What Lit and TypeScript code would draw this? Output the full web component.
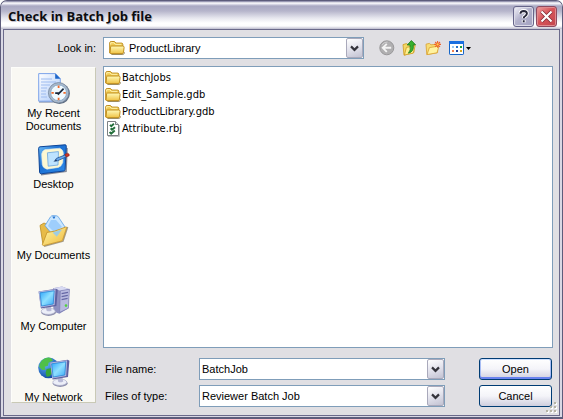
import { LitElement, html, css, svg, TemplateResult } from "lit";
import { customElement, property, state } from "lit/decorators.js";

const folder = html`<svg class="i16" viewBox="0 0 16 16" aria-hidden="true">
  <defs>
    <linearGradient id="ff" x1="0" y1="0" x2="0" y2="1">
      <stop offset="0" stop-color="#fffab8" /><stop offset="1" stop-color="#efc244" />
    </linearGradient>
  </defs>
  <path d="M.7 3q0-1.5 1.5-1.5h3.2l1.6 1.6h5.5q1.3 0 1.3 1.3V13H.7z" fill="#f0cb54" stroke="#bd8c20" />
  <path d="M1.7 4.6V2.7h3.2l1.4 1.6h6" fill="none" stroke="#fff3b0" />
  <path d="M2.6 6h11q1.6 0 1.5 1.4l-.6 4.8q-.2 1.4-1.4 1.4H2q-1 0-.9-1L1.6 7q.1-1 1-1z" fill="url(#ff)" stroke="#c29020" />
  <path d="M2.4 14.5h11.4q1.6-.2 1.8-2.2" fill="none" stroke="#6d5415" stroke-opacity=".65" />
</svg>`;

const batchFile = html`<svg class="i16" viewBox="0 0 16 16" aria-hidden="true">
  <path d="M2.5.5h8l3 3v11h-11z" fill="#fff" stroke="#7c8083" />
  <path d="M14.5 4v11.5H3" fill="none" stroke="#c0c2c4" />
  <path d="M10.5.5v3h3" fill="#dfe3e8" stroke="#7c8083" />
  <path d="M5 3.8l1.3 1.4 2.6-2.4M5.6 7.4L7 8.8l3-2.6M4.6 11l1.6 1.6 3.6-3" fill="none" stroke="#24703c" stroke-width="1.9" />
</svg>`;

const screen = (x: number, y: number) => svg`<g transform="translate(${x} ${y})">
  <ellipse cx="10" cy="23.5" rx="7.4" ry="3.6" fill="#8f90ad" />
  <ellipse cx="9.6" cy="22.4" rx="7" ry="3.2" fill="#eceef8" stroke="#a5a7c4" stroke-width=".6" />
  <path d="M7 17l5-1 1 5.6q-2.6 1.6-5 .4z" fill="#b7b9d6" />
  <path d="M0 2.6L17.4 0l1.8 1-1.4 16.2L2.4 19.6z" fill="#5f61a0" />
  <path d="M0 2.6L17 .4l-1 15.8L2 18.6z" fill="#b4b8e0" />
  <path d="M1.4 4l14.2-2-1 13.2L3 17.2z" fill="url(#lcd)" stroke="#2a86d6" stroke-width=".8" />
</g>`;

const lcd = svg`<defs><linearGradient id="lcd" x1="0" y1="0" x2="1" y2="1">
  <stop offset="0" stop-color="#2aa3fb" /><stop offset=".5" stop-color="#8fe0ff" /><stop offset="1" stop-color="#3aa7f6" />
</linearGradient></defs>`;

const recentIcon = html`<svg class="i32" viewBox="0 0 32 32" aria-hidden="true">
  <defs><linearGradient id="pg" x1="0" y1="0" x2="1" y2="1">
    <stop offset="0" stop-color="#fff" /><stop offset="1" stop-color="#a9c8fa" /></linearGradient></defs>
  <path d="M1 29h20l2-2" stroke="#5c6d96" stroke-opacity=".6" stroke-width="1.5" fill="none" />
  <path d="M.7.6h16.8l4.8 5v22.6H.7z" fill="url(#pg)" stroke="#6f9be8" stroke-width=".9" />
  <path d="M17.2.6v5.2h5.2z" fill="#1d66c9" />
  <path d="M3 6h11M3 9h15M3 12h9M3 15h6M3 18h5M3 21h5M3 24h6" stroke="#9ebcf0" stroke-width="1.2" />
  <circle cx="21.5" cy="20.6" r="10.4" fill="#5d6c80" />
  <circle cx="20.6" cy="19.8" r="10.2" fill="#a9b9cc" stroke="#72849b" stroke-width=".8" />
  <circle cx="20.6" cy="19.8" r="7.9" fill="#f1faff" stroke="#7fa3c4" stroke-width=".8" />
  <path d="M20.6 12.6v2.4M20.6 24.8v2.4M13.4 19.8h2.4M25.4 19.8h2.4" stroke="#f06b2c" stroke-width="1.8" />
  <path d="M17.2 20.2h4l4.4-4.6M21.2 20.2l-1.4 1.4" fill="none" stroke="#17263a" stroke-width="1.7" />
</svg>`;

const desktopIcon = html`<svg class="i32" viewBox="0 0 32 32" aria-hidden="true">
  <defs><linearGradient id="bl" x1="0" y1="0" x2="1" y2="1">
    <stop offset="0" stop-color="#6fc0fa" /><stop offset=".4" stop-color="#1b6fd2" /><stop offset="1" stop-color="#2e8cea" /></linearGradient></defs>
  <path d="M3 30.6l25-3.4L29 4" fill="none" stroke="#555d70" stroke-width="1.6" stroke-opacity=".7" />
  <path d="M.6 4.4Q.6 3 2 2.8L27 .8q1.4 0 1.3 1.4l-1.2 23.4q-.2 1.2-1.4 1.4L3.2 29.8q-1.4 0-1.6-1.4z" fill="url(#bl)" stroke="#0d4496" />
  <path d="M7 5.6l14.8-1.4q3.8 1.8 3.6 5.4l-.6 9q-1 3.6-4.4 4.8L9 25.2q-4-1-4.8-4.6L3.6 10Q4 7 7 5.6z" fill="#fdf8d2" stroke="#d6e8ee" stroke-width=".6" />
  <path d="M9.4 8.8l11-1.2v4l-.4 9.4-9.8 1.2z" fill="#bde3ff" stroke="#6aa4dc" stroke-width=".8" />
  <path d="M17 16.8l1.4-2.4 9-3.6 1.2 2-9.2 4z" fill="#6aa9ea" stroke="#1c4e90" stroke-width=".8" />
  <path d="M15.4 17.8l2.6-2.6 1.2 1.8z" fill="#1c3b6a" />
  <path d="M26.8 10.4l2.8-1.2q2.2.6 1.6 2.6l-3 1.2z" fill="#cc3423" stroke="#8c2015" stroke-width=".6" />
</svg>`;

const documentsIcon = html`<svg class="i32" viewBox="0 0 32 32" aria-hidden="true">
  <defs><linearGradient id="fd" x1="0" y1="0" x2="1" y2="1">
    <stop offset="0" stop-color="#fff7a8" /><stop offset="1" stop-color="#f0b93a" /></linearGradient></defs>
  <path d="M6 31.2l19-5L29.6 12" fill="none" stroke="#6b6147" stroke-opacity=".6" stroke-width="1.5" />
  <path d="M2 10.4l4-2.4 3 1.4 6-1.6 7 8-17 14z" fill="#e7bb48" stroke="#b98c24" stroke-width=".8" />
  <path d="M7 10.6L12.4 2q1-1.4 2.6-1.4l3.6.2q1.2.2 1.8 1.2l6.6 10L16.4 22z" fill="#c9e6ff" stroke="#5c9fe4" stroke-width=".8" />
  <path d="M13 5l5 0 6 7-8 5-6-6z" fill="#8fc6fb" fill-opacity=".75" />
  <path d="M14.4 1.4h3l-.8 2.2h-1.4z" fill="#2b77d0" />
  <path d="M4.4 29.6L9 17.4l7.4-1.2L27.8 12q1-.2.8.8L24.6 25q-.2.8-1 1L5.6 30.6q-1 0-1.2-1z" fill="url(#fd)" stroke="#c8962b" stroke-width=".9" />
  <path d="M14.6 17.4l9.6-3.2-5.4 7.6z" fill="#8fcaf6" fill-opacity=".85" />
</svg>`;

const computerIcon = html`<svg class="i32" viewBox="0 0 32 32" aria-hidden="true">${lcd}
  <path d="M15 2.2L24 .6l7.4 2.6-1 19-9 5.6-6-2.4z" fill="#8d8fc0" />
  <path d="M15 2.2L24 .6l7.4 2.6-9 1.6z" fill="#d8daf2" />
  <path d="M22.4 4.8l9-1.6-1 19-8.8 4.2z" fill="#b9bbe0" stroke="#7476ac" stroke-width=".6" />
  <path d="M23.6 7.6l6.4-1.2M23.6 10.6l6.2-1.2M23.6 13.6l6-1.2" stroke="#6567a4" stroke-width="1.1" />
  <circle cx="28" cy="19.6" r="1.3" fill="#50d33c" />
  ${screen(0.6, 2.8)}
</svg>`;

const networkIcon = html`<svg class="i32" viewBox="0 0 32 32" aria-hidden="true">${lcd}
  <defs><radialGradient id="gl" cx=".35" cy=".3" r=".8">
    <stop offset="0" stop-color="#63baff" /><stop offset="1" stop-color="#0b3f9e" /></radialGradient></defs>
  <circle cx="10.6" cy="10.8" r="10.4" fill="url(#gl)" />
  <path d="M5 2.4q4-2.6 8-1.4l2 2.6-4.4 2.2-.6 3-3.4 1 1 3-3.4.2-3-3q.4-5 3.8-7.6z" fill="#4fc04a" />
  <path d="M8.6 12l5-1 2 3.6-4 4.6-3 .6-1-4z" fill="#37a53a" />
  ${screen(12.2, 2.8)}
</svg>`;

const backIcon = html`<svg class="i16" viewBox="0 0 16 16" aria-hidden="true">
  <circle cx="7.8" cy="7.8" r="7" fill="#b0afb1" stroke="#989799" />
  <path d="M3 5q2-3.2 5.6-3" stroke="#cfcecf" fill="none" />
  <path d="M7.8 3.8L3.8 7.8l4 4M4.2 7.8h8" fill="none" stroke="#f4f4f4" stroke-width="1.9" />
</svg>`;

const upIcon = html`<svg class="i16" viewBox="0 0 16 16" aria-hidden="true">
  <path d="M1 4.6l3.4-1L6 4.6l6-.8v8.6L2 15.2z" fill="#f4d767" stroke="#d3a22c" stroke-width=".9" />
  <path d="M2.4 15l2-7.6 8.8-1.8-2 7.6z" fill="#fdf08f" stroke="#d3a22c" stroke-width=".9" />
  <path d="M6.4 13.2Q9.2 10.6 8 5H5.2L9.4.5l4.2 4.3h-2.4q1.2 7-4.8 8.4z" fill="#36b02e" stroke="#1b7a1b" stroke-width=".8" />
</svg>`;

const newIcon = html`<svg class="i16" viewBox="0 0 16 16" aria-hidden="true">
  <path d="M1 4.2l3.4-.8L6 4.8l6.6-.6v8.4L1.8 14.6z" fill="#f7dd74" stroke="#dba63a" stroke-width=".9" />
  <path d="M2 14.6L4.4 7.6 14 6l-2 6.8z" fill="#fff3a0" stroke="#dba63a" stroke-width=".9" />
  <path d="M12.6 1v6.8M9.2 4.4H16M10.2 2L15 6.8M15 2l-4.8 4.8" stroke="#f0602a" stroke-width="1.1" />
  <circle cx="12.6" cy="4.4" r="1.1" fill="#ffd24a" />
</svg>`;

const viewIcon = html`<svg class="view-icon" viewBox="0 0 23 16" aria-hidden="true">
  <rect x="1.5" y="1.5" width="14" height="13" rx=".6" fill="#fff" stroke="#1565c8" />
  <path d="M1 1h15v3H1z" fill="#1a6fe0" />
  <path d="M4 6h2v2H4z" fill="#9ccaf2" /><path d="M8 6h2v2H8z" fill="#2a72c6" /><path d="M12 6h2v2h-2z" fill="#1da03c" />
  <path d="M4 10h2v2H4z" fill="#f08050" /><path d="M8 10h2v2H8z" fill="#21409a" /><path d="M12 10h2v2h-2z" fill="#d9a520" />
  <path d="M18 7h5l-2.5 3z" fill="#000" />
</svg>`;

const chevron = html`<span class="drop" aria-hidden="true"><svg viewBox="0 0 9 7"><path d="M1 1.4l3.5 3.5L8 1.4" fill="none" stroke="#34343c" stroke-width="2.2" /></svg></span>`;

@customElement("place-bar")
class PlaceBar extends LitElement {
  static styles = css`
    :host { display: block; box-sizing: border-box; overflow: hidden; background: #f9f8f3;
      border: 1px solid #fdfdfa; border-right-color: #c9c9b6; border-bottom-color: #c9c9b6; padding-top: 5px; }
    .list { list-style: none; margin: 0; padding: 0; display: flex; flex-direction: column; }
    .item { height: 71px; }
    .item:last-child { height: 45px; }
    .place { display: flex; flex-direction: column; align-items: center; gap: 2px; width: 100%; padding: 0;
      border: 0; background: none; font: inherit; color: #000; line-height: 13px; white-space: pre-line; }
    .i32 { display: block; width: 32px; height: 32px; }
  `;
  places: { icon: TemplateResult; name: string }[] = [
    { icon: recentIcon, name: "My Recent\nDocuments" },
    { icon: desktopIcon, name: "Desktop" },
    { icon: documentsIcon, name: "My Documents" },
    { icon: computerIcon, name: "My Computer" },
    { icon: networkIcon, name: "My Network" },
  ];
  render() {
    return html`<ul class="list">${this.places.map(
      (p) => html`<li class="item"><button class="place">${p.icon}<span>${p.name}</span></button></li>`
    )}</ul>`;
  }
}

@customElement("app-root")
class AppRoot extends LitElement {
  @property() heading = "Check in Batch Job file";
  @state() fileName = "BatchJob";
  files = [
    { icon: folder, name: "BatchJobs" },
    { icon: folder, name: "Edit_Sample.gdb" },
    { icon: folder, name: "ProductLibrary.gdb" },
    { icon: batchFile, name: "Attribute.rbj" },
  ];

  static styles = css`
    :host { display: block; background: #fff; font: 11px "Liberation Sans", sans-serif; color: #000; }
    * { box-sizing: border-box; }
    .dialog { position: relative; display: flex; flex-direction: column; min-height: 100vh;
      border: 1px solid #5d5c7b; border-bottom-width: 2px; border-radius: 7px 7px 0 0; background: #d9d8e4; padding: 0 2px 1px; overflow: hidden; }
    .title { display: flex; align-items: center; gap: 2px; height: 28px; margin: 0 -2px; padding: 2px 5px 0 7px;
      background: linear-gradient(#77769a 0, #fff 2px, #e4e3ee 3px, #a9a8c2 5px, #b6b5cb 10px, #e6e6ee 17px, #fff 22px, #fdfdfe 25px, #bdbccd 28px); }
    .heading { flex: 1; margin: 0; font: bold 13px "Open Sans", sans-serif; line-height: 20px; color: #0c0c10; text-shadow: 1px 1px 0 #c4c4d0; }
    .cap { width: 21px; height: 21px; padding: 0; border: 1px solid #66658a; border-radius: 3px;
      background: linear-gradient(135deg, #f4f4fa, #b3b2cc 45%, #a3a2c0); box-shadow: inset 0 0 0 1px #dcdbe8; }
    .cap svg { display: block; width: 19px; height: 19px; }
    .close { background: linear-gradient(135deg, #eba0a0, #d8555a 45%, #c2434b); border-color: #8d4a60; box-shadow: inset 0 0 0 1px #e08a8e; }
    .body { flex: 1; display: flex; flex-direction: column; gap: 7px; background: #e0dfe3;
      border: 1px solid #6b6a8b; padding: 7px 6px 8px 7px; }
    .top { display: flex; align-items: center; height: 22px; }
    .look { width: 85px; text-align: right; }
    .combo { position: relative; display: flex; height: 22px; border: 1px solid #7f9db9; background: #fff; }
    .where { flex: 0 1 261px; margin-left: 7px; }
    .where .i16 { position: absolute; left: 5px; top: 2px; pointer-events: none; }
    .field { flex: 1; min-width: 0; width: 100%; height: 100%; margin: 0; padding: 0 18px 0 2px; border: 0; background: none;
      font: inherit; color: #000; appearance: none; outline: 0; border-radius: 0; }
    .where .field { padding-left: 25px; }
    .drop { position: absolute; right: 0; top: 0; bottom: 0; width: 17px; display: grid; place-items: center; pointer-events: none;
      border: 1px solid #a9a9bb; border-radius: 2px; background: linear-gradient(160deg, #fff, #e2e2ec 50%, #c2c2d2); }
    .drop svg { width: 9px; height: 7px; }
    .tools { display: flex; gap: 7px; margin-left: 15px; }
    .tool { display: block; padding: 0; border: 0; background: none; }
    .i16 { display: block; flex: none; width: 16px; height: 16px; }
    .view-icon { display: block; width: 23px; height: 16px; }
    .main { flex: 1; display: flex; gap: 7px; }
    .places { width: 85px; flex: none; margin: 1px 0 4px; }
    .right { flex: 1; min-width: 0; display: flex; flex-direction: column; gap: 10px; }
    .files { flex: 1; list-style: none; margin: 0; padding: 2px 1px; border: 1px solid #7f9db9; background: #fff;
      font: 11px "DejaVu Sans Condensed", "DejaVu Sans", sans-serif; }
    .file { display: flex; align-items: center; gap: 1px; height: 17px; }
    .form { display: grid; grid-template-columns: 96px minmax(0, 1fr) 73px; row-gap: 5px; align-items: center; margin-right: 1px; }
    .label { padding-left: 2px; }
    .form .combo { margin-right: 34px; }
    .push { height: 22px; padding: 0; border: 1px solid #003c74; border-radius: 3px; font: inherit; color: #000;
      background: linear-gradient(#fff, #f4f4f9 50%, #cfcede); }
    .primary { box-shadow: inset 0 -2px 0 #6982ee, inset 0 1px 0 #cee0ff, inset 1px 0 0 #a8bdf4, inset -1px 0 0 #a8bdf4; }
    .grip { position: absolute; right: 4px; bottom: 3px; width: 12px; height: 12px; }
  `;

  render() {
    return html`<section class="dialog" aria-labelledby="heading">
      <header class="title">
        <h1 class="heading" id="heading">${this.heading}</h1>
        <button class="cap" aria-label="Help"><svg viewBox="0 0 19 19">
          <path d="M6.4 6.8q.2-2.8 3.3-2.8 3.2.1 3.2 2.6 0 1.4-1.6 2.4-1.6.9-1.6 2.2M9.7 13v2.4" fill="none" stroke="#fff" stroke-width="3.8" />
          <path d="M6.4 6.8q.2-2.8 3.3-2.8 3.2.1 3.2 2.6 0 1.4-1.6 2.4-1.6.9-1.6 2.2M9.7 13.2v2" fill="none" stroke="#26263a" stroke-width="1.9" />
        </svg></button>
        <button class="cap close" aria-label="Close"><svg viewBox="0 0 19 19">
          <path d="M4.5 4.5l10 10M14.5 4.5l-10 10" stroke="#7c2732" stroke-width="3.6" />
          <path d="M4.5 4.5l10 10M14.5 4.5l-10 10" stroke="#fff" stroke-width="2.2" />
        </svg></button>
      </header>
      <div class="body">
        <div class="top">
          <label class="look" for="where">Look in:</label>
          <div class="combo where">${folder}
            <select class="field" id="where"><option>ProductLibrary</option></select>${chevron}
          </div>
          <div class="tools">
            <button class="tool" aria-label="Back">${backIcon}</button>
            <button class="tool" aria-label="Up one level">${upIcon}</button>
            <button class="tool" aria-label="New folder">${newIcon}</button>
            <button class="tool" aria-label="View menu">${viewIcon}</button>
          </div>
        </div>
        <div class="main">
          <place-bar class="places"></place-bar>
          <div class="right">
            <ul class="files">${this.files.map((f) => html`<li class="file">${f.icon}<span>${f.name}</span></li>`)}</ul>
            <div class="form">
              <label class="label" for="name">File name:</label>
              <div class="combo">
                <input class="field" id="name" .value=${this.fileName}
                  @input=${(e: Event) => (this.fileName = (e.target as HTMLInputElement).value)} />${chevron}
              </div>
              <button class="push primary">Open</button>
              <label class="label" for="type">Files of type:</label>
              <div class="combo">
                <select class="field" id="type"><option>Reviewer Batch Job</option></select>${chevron}
              </div>
              <button class="push">Cancel</button>
            </div>
          </div>
        </div>
      </div>
      <svg class="grip" viewBox="0 0 12 12" aria-hidden="true">
        <path d="M9 1h2v2H9zM9 5h2v2H9zM5 5h2v2H5zM9 9h2v2H9zM5 9h2v2H5zM1 9h2v2H1z" fill="#fff" />
        <path d="M8 0h2v2H8zM8 4h2v2H8zM4 4h2v2H4zM8 8h2v2H8zM4 8h2v2H4zM0 8h2v2H0z" fill="#b5b3a4" />
      </svg>
    </section>`;
  }
}
